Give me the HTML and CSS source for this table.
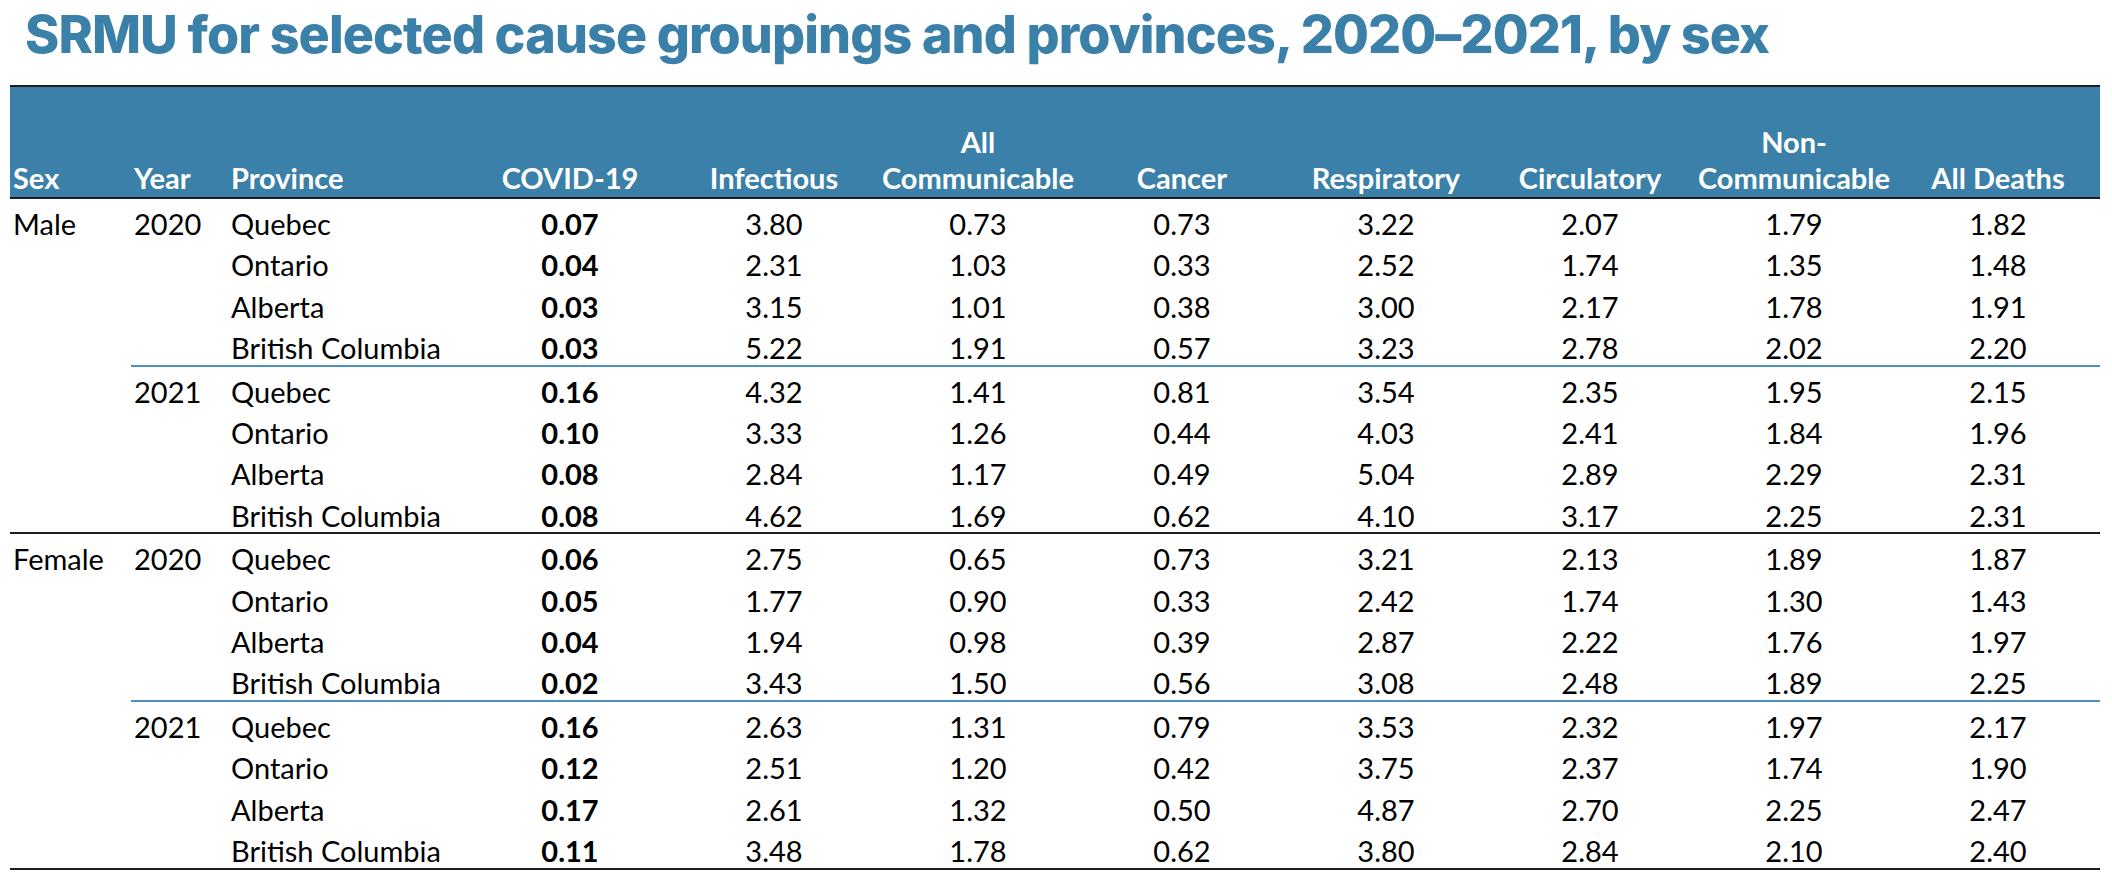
FILE: index.html
```html
<!DOCTYPE html>
<html lang="en">
<head>
<meta charset="utf-8">
<title>SRMU by cause grouping, province and sex</title>
<link rel="stylesheet" href="styles.css">
</head>
<body>
<div class="page">
  <h1 class="title">SRMU for selected cause groupings and provinces, 2020–2021, by sex</h1>
  <table class="srmu">
    <colgroup>
      <col class="c-sex"><col class="c-year"><col class="c-prov">
      <col class="c-num"><col class="c-num"><col class="c-num"><col class="c-num">
      <col class="c-num"><col class="c-num"><col class="c-num"><col class="c-num">
    </colgroup>
    <thead>
      <tr>
        <th class="left">Sex</th>
        <th class="left">Year</th>
        <th class="left">Province</th>
        <th>COVID-19</th>
        <th>Infectious</th>
        <th>All<br>Communicable</th>
        <th>Cancer</th>
        <th>Respiratory</th>
        <th>Circulatory</th>
        <th>Non-<br>Communicable</th>
        <th>All Deaths</th>
      </tr>
    </thead>
    <tbody class="sex">
      <tr>
        <td class="left top" rowspan="8">Male</td>
        <td class="left top blue" rowspan="4">2020</td>
        <td class="left">Quebec</td><td class="b">0.07</td><td>3.80</td><td>0.73</td><td>0.73</td><td>3.22</td><td>2.07</td><td>1.79</td><td>1.82</td>
      </tr>
      <tr><td class="left">Ontario</td><td class="b">0.04</td><td>2.31</td><td>1.03</td><td>0.33</td><td>2.52</td><td>1.74</td><td>1.35</td><td>1.48</td></tr>
      <tr><td class="left">Alberta</td><td class="b">0.03</td><td>3.15</td><td>1.01</td><td>0.38</td><td>3.00</td><td>2.17</td><td>1.78</td><td>1.91</td></tr>
      <tr class="grp-end"><td class="left">British Columbia</td><td class="b">0.03</td><td>5.22</td><td>1.91</td><td>0.57</td><td>3.23</td><td>2.78</td><td>2.02</td><td>2.20</td></tr>
      <tr>
        <td class="left top" rowspan="4">2021</td>
        <td class="left">Quebec</td><td class="b">0.16</td><td>4.32</td><td>1.41</td><td>0.81</td><td>3.54</td><td>2.35</td><td>1.95</td><td>2.15</td>
      </tr>
      <tr><td class="left">Ontario</td><td class="b">0.10</td><td>3.33</td><td>1.26</td><td>0.44</td><td>4.03</td><td>2.41</td><td>1.84</td><td>1.96</td></tr>
      <tr><td class="left">Alberta</td><td class="b">0.08</td><td>2.84</td><td>1.17</td><td>0.49</td><td>5.04</td><td>2.89</td><td>2.29</td><td>2.31</td></tr>
      <tr><td class="left">British Columbia</td><td class="b">0.08</td><td>4.62</td><td>1.69</td><td>0.62</td><td>4.10</td><td>3.17</td><td>2.25</td><td>2.31</td></tr>
    </tbody>
    <tbody class="sex">
      <tr>
        <td class="left top" rowspan="8">Female</td>
        <td class="left top blue" rowspan="4">2020</td>
        <td class="left">Quebec</td><td class="b">0.06</td><td>2.75</td><td>0.65</td><td>0.73</td><td>3.21</td><td>2.13</td><td>1.89</td><td>1.87</td>
      </tr>
      <tr><td class="left">Ontario</td><td class="b">0.05</td><td>1.77</td><td>0.90</td><td>0.33</td><td>2.42</td><td>1.74</td><td>1.30</td><td>1.43</td></tr>
      <tr><td class="left">Alberta</td><td class="b">0.04</td><td>1.94</td><td>0.98</td><td>0.39</td><td>2.87</td><td>2.22</td><td>1.76</td><td>1.97</td></tr>
      <tr class="grp-end"><td class="left">British Columbia</td><td class="b">0.02</td><td>3.43</td><td>1.50</td><td>0.56</td><td>3.08</td><td>2.48</td><td>1.89</td><td>2.25</td></tr>
      <tr>
        <td class="left top" rowspan="4">2021</td>
        <td class="left">Quebec</td><td class="b">0.16</td><td>2.63</td><td>1.31</td><td>0.79</td><td>3.53</td><td>2.32</td><td>1.97</td><td>2.17</td>
      </tr>
      <tr><td class="left">Ontario</td><td class="b">0.12</td><td>2.51</td><td>1.20</td><td>0.42</td><td>3.75</td><td>2.37</td><td>1.74</td><td>1.90</td></tr>
      <tr><td class="left">Alberta</td><td class="b">0.17</td><td>2.61</td><td>1.32</td><td>0.50</td><td>4.87</td><td>2.70</td><td>2.25</td><td>2.47</td></tr>
      <tr><td class="left">British Columbia</td><td class="b">0.11</td><td>3.48</td><td>1.78</td><td>0.62</td><td>3.80</td><td>2.84</td><td>2.10</td><td>2.40</td></tr>
    </tbody>
  </table>
</div>
</body>
</html>
```
FILE: styles.css
```css
html, body {
  margin: 0;
  padding: 0;
  background: #ffffff;
}

.page {
  padding: 0 0 0 10px;
}

.title {
  margin: 0 0 15px 0;
  padding-left: 15px;
  font-family: Inter, "Noto Sans", sans-serif;
  font-weight: 800;
  font-size: 52px;
  line-height: 70px;
  letter-spacing: -0.9px;
  color: #3b80a9;
  white-space: nowrap;
}

.srmu {
  border-collapse: collapse;
  table-layout: fixed;
  width: 2090px;
  font-family: Lato, "Liberation Sans", sans-serif;
  font-size: 29px;
  color: #000000;
}

.c-sex { width: 121px; }
.c-year { width: 97px; }
.c-prov { width: 240px; }
.c-num { width: 204px; }

.srmu thead tr {
  border-top: 2px solid #1e1e1e;
  border-bottom: 2px solid #1e1e1e;
}

.srmu th {
  background: #3b80a9;
  color: #ffffff;
  font-weight: 700;
  height: 110px;
  padding: 0 3px;
  line-height: 36.7px;
  vertical-align: bottom;
  text-align: center;
  white-space: nowrap;
}

.srmu td {
  padding: 8px 3px 0 3px;
  line-height: 33.4px;
  text-align: center;
  white-space: nowrap;
  vertical-align: top;
}

.srmu th.left,
.srmu td.left {
  text-align: left;
}

.srmu td.b {
  font-weight: 700;
}

.srmu tbody.sex {
  border-bottom: 2px solid #1e1e1e;
}

.srmu tr.grp-end td,
.srmu td.blue {
  border-bottom: 2px solid #4c8fc1;
}
```
